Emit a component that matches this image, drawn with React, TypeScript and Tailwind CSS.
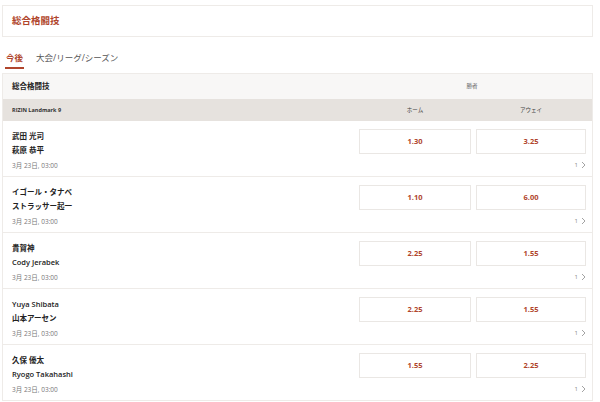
import React from "react";

const rows = [
  { a: "武田 光司", b: "萩原 恭平", h: "1.30", w: "3.25" },
  { a: "イゴール・タナベ", b: "ストラッサー起一", h: "1.10", w: "6.00" },
  { a: "貴賀神", b: "Cody Jerabek", h: "2.25", w: "1.55" },
  { a: "Yuya Shibata", b: "山本アーセン", h: "2.25", w: "1.55" },
  { a: "久保 優太", b: "Ryogo Takahashi", h: "1.55", w: "2.25" },
];

export default function App() {
  return (
    <div
      className="w-[600px] h-[402px] bg-white overflow-hidden pl-[2px] pr-[7px] pt-[5px]"
      style={{ fontFamily: '"Open Sans", "Noto Sans CJK JP", sans-serif' }}
    >
      <div className="h-[32px] border border-[#eeebe8] flex items-center pl-[9px]">
        <span className="text-[9.5px] font-bold text-[#b0452c]">総合格闘技</span>
      </div>
      <div className="flex items-end h-[32px] pl-[3px] gap-[12px]">
        <div className="flex flex-col items-center">
          <span className="text-[8.5px] text-[#b0452c] leading-none font-semibold pb-[5px] px-[1px]">今後</span>
          <div className="h-[2px] w-full bg-[#b0452c]" />
        </div>
        <span className="text-[8.5px] text-[#555] leading-none pb-[7px]">大会/リーグ/シーズン</span>
      </div>
      <div className="mt-[4px] border border-[#eeebe8] border-b-0">
        <div className="h-[25px] bg-[#f8f7f6] flex items-center">
          <span className="pl-[9px] flex-1 text-[7.5px] font-bold text-[#222]">総合格闘技</span>
          <span className="w-[228px] mr-[6px] text-center text-[5.5px] text-[#666]">勝者</span>
        </div>
        <div className="h-[22px] bg-[#e6e2de] flex items-center">
          <span className="pl-[9px] flex-1 text-[5.5px] font-bold text-[#333]">RIZIN Landmark 9</span>
          <div className="w-[228px] mr-[5px] flex gap-[5px]">
            <span className="w-[112px] text-center text-[5.5px] text-[#444]">ホーム</span>
            <span className="w-[110px] text-center text-[5.5px] text-[#444]">アウェイ</span>
          </div>
        </div>
        {rows.map((r, i) => (
          <div key={i} className="h-[56px] border-b border-[#eeebe8] flex">
            <div className="flex-1 pl-[9px] pt-[8px]">
              <div className="text-[7.5px] font-semibold text-[#222] leading-[14px]">{r.a}</div>
              <div className="text-[7.5px] font-semibold text-[#222] leading-[14px]">{r.b}</div>
              <div className="text-[6.5px] text-[#777] leading-[9px] mt-[4px]">3月 23日, 03:00</div>
            </div>
            <div className="w-[228px] mr-[5px] pt-[8px] flex flex-col">
              <div className="flex gap-[5px]">
                <div className="w-[112px] h-[25px] border border-[#eae7e4] flex items-center justify-center text-[7.5px] font-bold text-[#b0452c]">
                  {r.h}
                </div>
                <div className="w-[110px] h-[25px] border border-[#eae7e4] flex items-center justify-center text-[7.5px] font-bold text-[#b0452c]">
                  {r.w}
                </div>
              </div>
              <div className="flex justify-end items-center gap-[3px] mt-[7px] pr-[1px] text-[6px] text-[#888] leading-none">
                <span>1</span>
                <svg width="5" height="8" viewBox="0 0 5 8" fill="none">
                  <path d="M1 1l3 3-3 3" stroke="#999" strokeWidth="0.9" />
                </svg>
              </div>
            </div>
          </div>
        ))}
      </div>
    </div>
  );
}
